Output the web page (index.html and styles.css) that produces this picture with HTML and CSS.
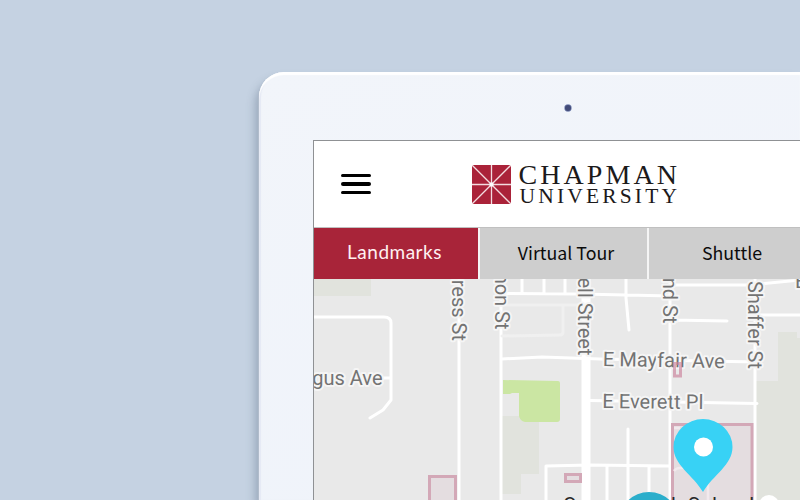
FILE: index.html
```html
<!DOCTYPE html>
<html lang="en">
<head>
<meta charset="utf-8">
<title>Chapman University Map</title>
<link rel="stylesheet" href="styles.css">
</head>
<body>
<div class="tablet">
  <div class="camera-row"><svg class="camera" viewBox="0 0 8 8"><circle cx="4" cy="4" r="3.700" fill="#7886b3"/><circle cx="4" cy="4" r="3" fill="#424b78"/></svg></div>
  <main class="screen">
    <header class="header">
      <button class="menu" aria-label="Menu"><span></span><span></span><span></span></button>
      <div class="brand">
        <svg class="mark" viewBox="0 0 39 39">
          <rect width="39" height="39" rx="1" fill="#aa2239"/>
          <path d="M19.5 0V39M0 19.5H39M0 0L39 39M39 0L0 39" stroke="#f3dce0" stroke-width="1.3"/>
          <rect x="17.7" y="17.7" width="3.6" height="3.6" fill="#fff"/>
        </svg>
        <svg class="wordmark" viewBox="519 160 160 50">
          <text x="518.5" y="184.700" font-size="28" textLength="158.500">CHAPMAN</text>
          <text x="519.5" y="204.3" font-size="21.5" textLength="157.500">UNIVERSITY</text>
        </svg>
      </div>
    </header>
    <nav class="tabs">
      <a class="tab active">Landmarks</a>
      <a class="tab virtual">Virtual Tour</a>
      <a class="tab shuttle">Shuttle</a>
    </nav>
    <svg class="map" viewBox="314 279 486 221">
      <g fill="#e1e3dd">
        <path d="M314 279H371V296H314Z"/>
        <path d="M502 416H539V474H521V494H502Z"/>
        <path d="M778 332H797V338H800V500H756V381H778Z"/>
      </g>
      <path fill="#cbe6a3" d="M503 380L558 381Q560 381 560 383V419Q560 422 557 422H525Q520 421 519 416V393H512L510 394H503Z"/>
      <g class="roads">
        <path d="M314 317H384Q391 317 391 323V400L383 410L370 418M383 378H391"/>
        <path d="M459 279V500M501 279V500"/>
        <path d="M503 293.5L580 294L672 296M522 279V293M544 279V293M565 279V293M626 279V298L629 330"/>
        <path d="M502 305H580M502 336L560 335Q563 335 563 332V306" stroke="#f0f0f0"/>
        <path d="M502 359L542 357L600 359L757 362"/>
        <path d="M586 279V500" stroke-width="9"/>
        <path d="M590 400.5L757 403.5M628 429V500M546 500V466L590 465L670 466M607 466V500M649 466V500"/>
        <path d="M670 279V500M755 279V500M670 285L750 285L800 280M671 320L727 321M755 315H800"/>
      </g>
      <g class="campus">
        <rect x="429.500" y="476.500" width="26" height="40"/>
        <rect x="565.500" y="474.500" width="15" height="7"/>
        <rect x="672.500" y="424.500" width="79.500" height="90"/>
      </g>
      <path d="M674 428H680M674 471Q676 468 680 468H704Q708 468 708 474V500" fill="none" stroke="#f2e9ed" stroke-width="2.500"/>
      <g class="streets">
        <text transform="translate(451.500 341) rotate(90)" text-anchor="end">ress St</text>
        <text transform="translate(494.500 329.500) rotate(90)" text-anchor="end">non St</text>
        <text transform="translate(577.500 355.500) rotate(90)" text-anchor="end">ell Street</text>
        <text transform="translate(662.500 323.500) rotate(90)" text-anchor="end">nd St</text>
        <text transform="translate(747.500 281) rotate(90)" textLength="88">Shaffer St</text>
        <text x="382.500" y="385" text-anchor="end">gus Ave</text>
        <text transform="translate(602.700 366) rotate(1)" textLength="122">E Mayfair Ave</text>
        <text transform="translate(602.300 408) rotate(.6)" textLength="101">E Everett Pl</text>
        <text x="795" y="288">E</text>
      </g>
      <rect x="674.500" y="363.500" width="6" height="12.500" fill="none" stroke="#cb819b" stroke-opacity=".65" stroke-width="3"/>
      <g class="places">
        <text x="563" y="512">C</text>
        <text x="671" y="512">l</text>
        <text x="688" y="512" textLength="66">School</text>
      </g>
      <circle cx="649" cy="522" r="30" fill="#2baecb"/>
      <circle cx="769" cy="505" r="10" fill="#fff"/>
      <path fill="#38d2f5" d="M703 492C693 475 673.500 465 673.500 447A29.500 28 0 0 1 732.500 447C732.500 465 713 475 703 492Z"/>
      <circle cx="703.500" cy="447" r="9.500" fill="#fff"/>
    </svg>
  </main>
</div>
</body>
</html>
```
FILE: styles.css
```css
* { box-sizing: border-box; }
body {
  margin: 0;
  width: 800px;
  height: 500px;
  overflow: hidden;
  padding: 72px 0 0 259px;
  background: #c5d2e2;
}
.tablet {
  width: 541px;
  height: 428px;
  padding-left: 54px;
  border-radius: 25px 0 0 0;
  background: linear-gradient(160deg, #f2f5fa, #eff3fa);
  box-shadow: inset 0 3px 1px #fff, inset 2px 0 1px #e5e9f4, -1px 1px 1px #b3becd, -4px 7px 9px rgba(100, 117, 139, .45);
}
.camera-row { height: 68px; padding: 32px 0 0 251px; }
.camera { display: block; width: 8px; height: 8px; }
.screen {
  width: 487px;
  height: 360px;
  border: solid #8f9194;
  border-width: 1px 0 0 1px;
  background: #fff;
}
.header {
  height: 87px;
  display: flex;
  align-items: center;
  padding-left: 27px;
  border-bottom: 1px solid #c0c0c0;
}
.menu {
  display: flex;
  flex-direction: column;
  gap: 5px;
  width: 30px;
  padding: 0;
  border: 0;
  background: none;
}
.menu span { height: 3.5px; border-radius: 2px; background: #000; }
.brand { display: flex; align-items: center; gap: 8px; margin-left: 101px; }
.mark { width: 39px; height: 39px; }
.wordmark {
  width: 160px;
  height: 50px;
  overflow: visible;
  font-family: "Liberation Serif", serif;
  fill: #1c1a1b;
}
.tabs {
  display: grid;
  grid-template-columns: 164px 167px 151px;
  gap: 2px;
  height: 51px;
  background: #f5f5f5;
}
.tab {
  display: flex;
  align-items: center;
  justify-content: center;
  padding-bottom: 3px;
  background: #cecece;
  color: #0b0b0b;
  font: 17.8px/46px "Noto Sans CJK SC", sans-serif;
}
.active {
  padding-right: 3px;
  background: #a82439;
  color: #fff0f1;
  font-family: Lato, sans-serif;
  font-size: 19px;
  letter-spacing: .5px;
}
.virtual { padding-left: 5px; }
.shuttle { padding-left: 15px; }
.tabs { grid-template-columns: 164px 167px 1fr; }
.map { display: block; width: 486px; height: 221px; background: #e9e9e9; }
.roads { fill: none; stroke: #fff; stroke-width: 3; stroke-linejoin: round; stroke-linecap: round; }
.campus { fill: rgba(211, 175, 190, .2); stroke: #d3a8b7; stroke-width: 3; }
.streets {
  font: 20px Roboto, sans-serif;
  fill: #737373;
  stroke: #f5f5f5;
  stroke-width: 4px;
  stroke-linejoin: round;
  paint-order: stroke;
}
.places { font: 20px Roboto, sans-serif; fill: #292929; }
```
